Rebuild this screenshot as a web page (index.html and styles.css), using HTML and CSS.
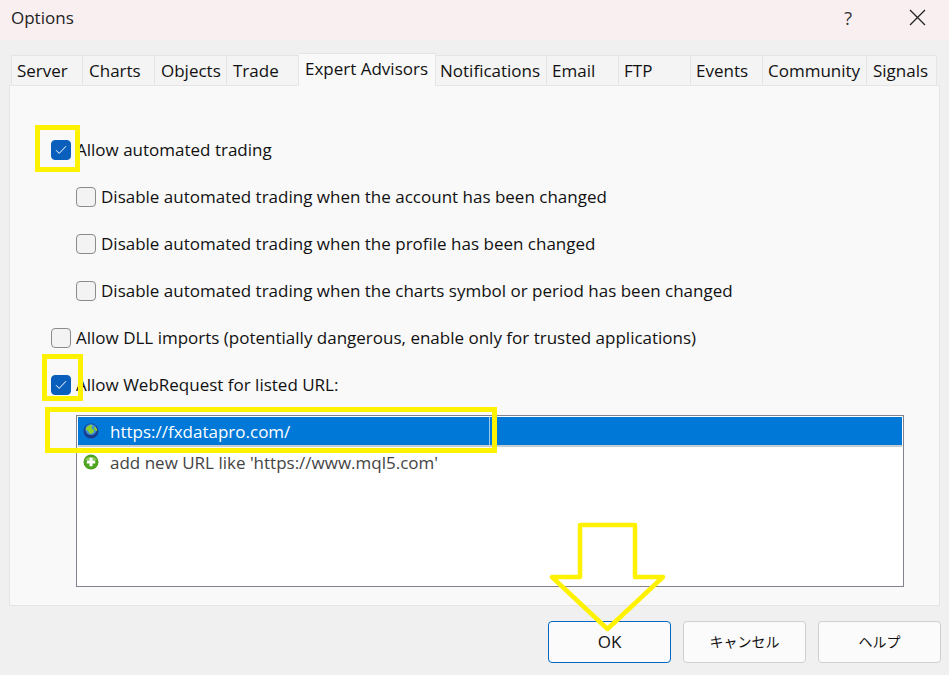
FILE: index.html
```html
<!DOCTYPE html>
<html lang="en">
<head>
<meta charset="utf-8">
<title>Options</title>
<link rel="stylesheet" href="styles.css">
</head>
<body>
<div class="dialog">
  <header class="titlebar">
    <span class="title">Options</span>
    <span class="help-q">?</span>
    <svg class="close" width="17" height="17" viewBox="0 0 17 17"><path d="M1 1 16 16M16 1 1 16" stroke="#222" stroke-width="1.300" fill="none"/></svg>
  </header>
  <nav class="tabs">
    <span class="tab w72 first">Server</span>
    <span class="tab w72">Charts</span>
    <span class="tab w72">Objects</span>
    <span class="tab w72">Trade</span>
    <span class="tab active">Expert Advisors</span>
    <span class="tab notif">Notifications</span>
    <span class="tab w72 tight">Email</span>
    <span class="tab w72 tight">FTP</span>
    <span class="tab w72 tight">Events</span>
    <span class="tab comm">Community</span>
    <span class="tab sig">Signals</span>
  </nav>
  <main class="panel">
    <label class="row lvl0"><span class="cb on"><svg width="12" height="10" viewBox="0 0 12 10"><path d="M1 5.200 4.200 8.400 11 1.200" stroke="#fff" stroke-width="1" fill="none"/></svg></span>Allow automated trading</label>
    <label class="row lvl1"><span class="cb"></span>Disable automated trading when the account has been changed</label>
    <label class="row lvl1"><span class="cb"></span>Disable automated trading when the profile has been changed</label>
    <label class="row lvl1"><span class="cb"></span>Disable automated trading when the charts symbol or period has been changed</label>
    <label class="row lvl0"><span class="cb"></span>Allow DLL imports (potentially dangerous, enable only for trusted applications)</label>
    <label class="row lvl0"><span class="cb on"><svg width="12" height="10" viewBox="0 0 12 10"><path d="M1 5.200 4.200 8.400 11 1.200" stroke="#fff" stroke-width="1" fill="none"/></svg></span>Allow WebRequest for listed URL:</label>
    <div class="list">
      <div class="item selected">
        <div class="cell">
          <svg class="ico" width="16" height="16" viewBox="0 0 16 16"><circle cx="8" cy="8" r="7.500" fill="#1b3c8c"/><circle cx="8" cy="6.500" r="5.500" fill="#3f8fd8"/><path d="M2.500 6.500C3.500 3 6.500 1.500 9 2c1 1-.5 2-.5 3s2.500 1 2.500 3-3 3.500-4.200 2.400S6 7.500 2.500 6.500zM11.500 3.500c2 1 3 3 2.800 4.700l-2.300-1-1-2z" fill="#8fd02a"/></svg>
          <span>https://fxdatapro.com/</span>
        </div>
      </div>
      <div class="item muted">
        <svg class="ico" width="16" height="16" viewBox="0 0 16 16"><circle cx="8" cy="8" r="7.500" fill="#4ea41f"/><path d="M2 6a6.500 5 0 0 1 12 0z" fill="#8ccc5a"/><path d="M8 3.800v8.400M3.800 8h8.400" stroke="#fff" stroke-width="3"/></svg>
        <span>add new URL like 'https://www.mql5.com'</span>
      </div>
    </div>
  </main>
  <footer class="actions">
    <button class="btn default ok">OK</button>
    <button class="btn">キャンセル</button>
    <button class="btn">ヘルプ</button>
  </footer>
</div>
<div class="mark m1"></div>
<div class="mark m2"></div>
<div class="mark m3"></div>
<svg class="arrow" width="120" height="115" viewBox="0 0 120 115"><path d="M31 4H86V56H114L58.500 108 3 56H31Z" fill="none" stroke="#fff200" stroke-width="4.500" stroke-linejoin="round"/></svg>
</body>
</html>
```
FILE: styles.css
```css
* { box-sizing: border-box; }
html, body { margin: 0; height: 100%; }
body {
  position: relative;
  width: 949px;
  height: 675px;
  overflow: hidden;
  background: #f0f0f0;
  font-family: "Open Sans", "Noto Sans CJK JP", sans-serif;
  font-size: 17px;
  color: #111;
}
.dialog { display: flex; flex-direction: column; height: 100%; }
.titlebar {
  display: flex;
  align-items: center;
  height: 40px;
  padding: 0 23px 5px 11px;
  background: #f9eff1;
  color: #222;
}
.title { flex: 1; }
.help-q { margin-right: 57px; font-size: 18px; color: #333; }
.tabs {
  display: flex;
  align-items: flex-end;
  height: 45px;
  padding-left: 11px;
}
.tab {
  display: flex;
  align-items: center;
  height: 30px;
  padding-left: 6px;
  background: #f4f4f4;
  border: 1px solid #e5e5e5;
  border-bottom: 0;
  border-left-width: 0;
  white-space: nowrap;
}
.tab.first { border-left-width: 1px; padding-left: 5px; }
.tab.tight { padding-left: 5px; }
.w72 { width: 72px; }
.notif { width: 111px; padding-left: 4px; }
.comm { width: 104px; padding-left: 5px; }
.sig { width: 70px; }
.tab.active {
  position: relative;
  width: 137px;
  height: 33px;
  padding-bottom: 3px;
  background: #f9f9f9;
  border-top: 1px solid #e5e5e5;
  margin-bottom: -1px;
  z-index: 1;
}
.panel {
  display: flex;
  flex-direction: column;
  width: 931px;
  height: 521px;
  margin-left: 9px;
  padding-top: 40px;
  background: #f9f9f9;
  border: 1px solid #e5e5e5;
}
.row {
  display: flex;
  align-items: center;
  height: 47px;
  white-space: nowrap;
}
.lvl0 { padding-left: 41px; }
.lvl1 { padding-left: 66px; }
.cb {
  flex: none;
  display: flex;
  align-items: center;
  justify-content: center;
  width: 20px;
  height: 20px;
  margin-right: 5px;
  background: #f3f3f3;
  border: 1px solid #8b8b8b;
  border-radius: 4px;
}
.cb.on { background: #0a5fbd; border-color: #0a5fbd; }
.list {
  width: 828px;
  height: 172px;
  margin: 7px 0 0 66px;
  padding: 1px;
  background: #fff;
  border: 1px solid #82828e;
}
.item, .cell {
  display: flex;
  align-items: center;
  gap: 11px;
}
.item { height: 30px; padding-left: 5px; }
.item.selected {
  padding-left: 0;
  background: #0078d7;
  color: #fff;
  border-bottom: 2px solid #c8ccd0;
}
.cell {
  width: 412px;
  height: 100%;
  padding-left: 5px;
  border-right: 1px solid #9cc8ec;
}
.muted { color: #444; }
.ico { flex: none; }
.actions {
  display: flex;
  justify-content: flex-end;
  gap: 12px;
  padding: 15px 8px 0 0;
}
.btn {
  width: 123px;
  height: 42px;
  padding: 0 0 2px;
  background: #fbfbfb;
  border: 1px solid #cfcfcf;
  border-radius: 4px;
  font: inherit;
  font-size: 14px;
  color: #111;
}
.btn.ok { font-size: 17px; }
.btn.default { border-color: #0067c0; }
.mark { position: absolute; border: 5px solid #fff200; }
.m1 { left: 35px; top: 125px; width: 45px; height: 47px; }
.m2 { left: 42px; top: 354px; width: 41px; height: 47px; }
.m3 { left: 45px; top: 407px; width: 452px; height: 46px; }
.arrow { position: absolute; left: 549px; top: 521px; }
```
